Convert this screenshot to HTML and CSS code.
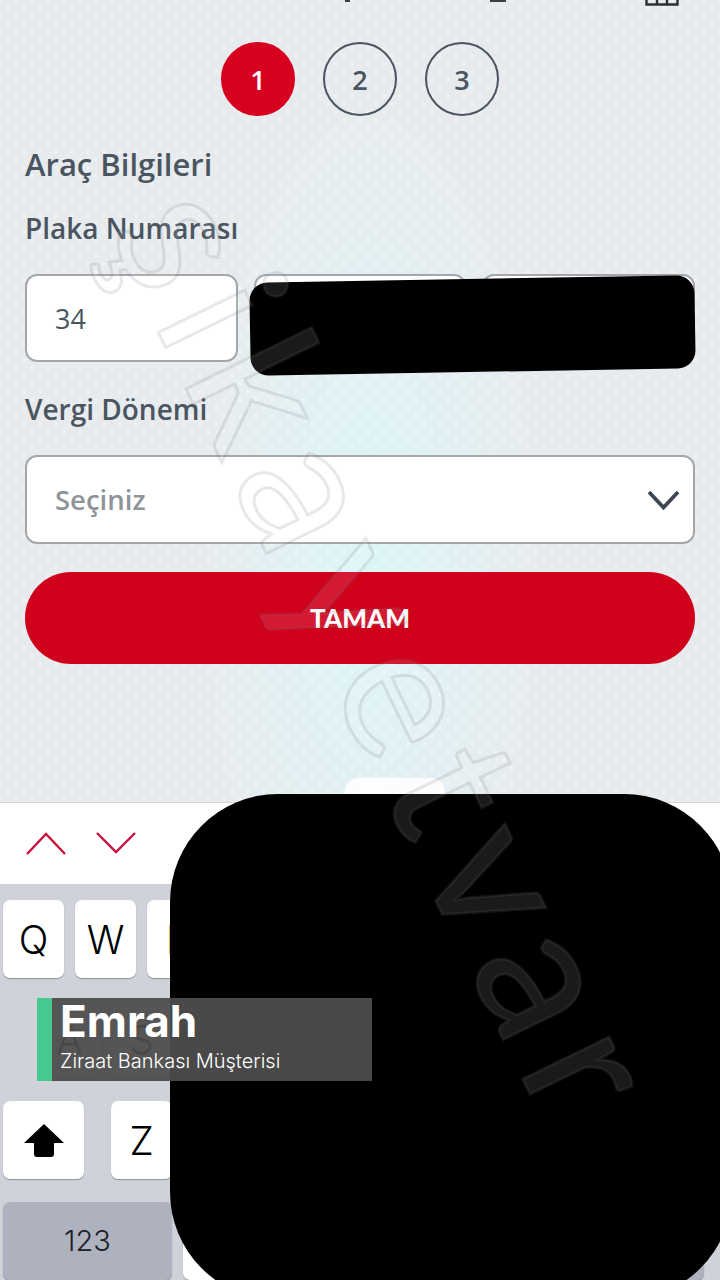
FILE: index.html
```html
<!DOCTYPE html>
<html lang="tr">
<head>
    <meta charset="utf-8">
    <title>Araç Bilgileri</title>
    <link rel="stylesheet" href="styles.css">
</head>
<body>
    <div class="screen">
        <div class="topbar">
            <span class="top-mark top-mark-a"></span>
            <span class="top-mark top-mark-b"></span>
            <svg class="top-icon" width="34" height="6" viewBox="0 0 34 6">
                <path d="M1.5 0V4.5H32.5V0M12 0V4.5M22 0V4.5" fill="none" stroke="#2b2f33" stroke-width="2.4"/>
            </svg>
        </div>

        <div class="steps">
            <div class="step step-active">1</div>
            <div class="step">2</div>
            <div class="step">3</div>
        </div>

        <div class="form">
            <h2 class="form-title">Araç Bilgileri</h2>
            <div class="form-label plate-label">Plaka Numarası</div>
            <div class="plate-row">
                <div class="field">34</div>
                <div class="field"></div>
                <div class="field"></div>
            </div>
            <div class="form-label period-label">Vergi Dönemi</div>
            <div class="field select-field">
                <span class="placeholder">Seçiniz</span>
                <svg width="33" height="20" viewBox="0 0 33 20">
                    <path d="M2 2L16.5 17.5L31 2" fill="none" stroke="#3e474f" stroke-width="3.8"/>
                </svg>
            </div>
            <button class="submit-btn" type="button">TAMAM</button>
        </div>

        <div class="keyboard-area">
            <div class="accessory-bar">
                <svg width="40" height="24" viewBox="0 0 40 24">
                    <path d="M1 23L20 3L39 23" fill="none" stroke="#c8103e" stroke-width="2.4"/>
                </svg>
                <svg width="40" height="24" viewBox="0 0 40 24">
                    <path d="M1 2L20 21L39 2" fill="none" stroke="#c8103e" stroke-width="2.4"/>
                </svg>
            </div>
            <div class="keyboard">
                <div class="key-row row-one">
                    <div class="key">Q</div>
                    <div class="key">W</div>
                    <div class="key">E</div>
                </div>
                <div class="key-row row-two">
                    <div class="key">A</div>
                    <div class="key">S</div>
                </div>
                <div class="key-row row-three">
                    <div class="key key-shift">
                        <svg width="42" height="36" viewBox="0 0 42 36">
                            <path d="M21 2L41 21H31V32Q31 35 28 35H14Q11 35 11 32V21H1Z" fill="#000"/>
                        </svg>
                    </div>
                    <div class="key">Z</div>
                </div>
                <div class="key-row row-four">
                    <div class="key key-dark key-num">123</div>
                    <div class="key key-space"></div>
                    <div class="key key-return"></div>
                </div>
            </div>
        </div>

        <div class="popup-blob"></div>
        <div class="cover cover-plate"></div>
        <div class="cover cover-keyboard"></div>
        <div class="watermark">şikayetvar</div>

        <div class="caption">
            <div class="caption-name">Emrah</div>
            <div class="caption-role">Ziraat Bankası Müşterisi</div>
        </div>
    </div>
</body>
</html>
```

FILE: styles.css
```css
body {
    margin: 0;
    font-family: "Open Sans", Lato, sans-serif;
    color: #4a5560;
}

.screen {
    position: relative;
    width: 720px;
    height: 1280px;
    overflow: hidden;
    display: flex;
    flex-direction: column;
    background-color: #e7ebee;
    background-image:
        radial-gradient(circle, rgba(255, 255, 255, 0.4) 1.3px, transparent 2.1px),
        radial-gradient(circle, rgba(255, 255, 255, 0.4) 1.3px, transparent 2.1px),
        radial-gradient(ellipse 170px 460px at 370px 560px, #dcf6f8, transparent);
    background-size: 16px 16px, 16px 16px, 100% 100%;
    background-position: 0 0, 8px 8px, 0 0;
}

.topbar {
    height: 6px;
    display: flex;
}

.top-mark {
    display: block;
    background: #3a3f44;
}

.top-mark-a {
    width: 5px;
    height: 2px;
    margin-left: 345px;
}

.top-mark-b {
    width: 16px;
    height: 2px;
    margin-left: 140px;
}

.top-icon {
    margin-left: 139px;
}

.steps {
    display: flex;
    justify-content: center;
    gap: 28px;
    margin-top: 36px;
}

.step {
    width: 74px;
    height: 74px;
    box-sizing: border-box;
    border: 2px solid #4b5560;
    border-radius: 50%;
    display: flex;
    align-items: center;
    justify-content: center;
    font-size: 27px;
    font-weight: 600;
}

.step-active {
    background: #d8001f;
    border-color: #d8001f;
    color: #fff;
}

.form {
    padding: 0 25px;
}

.form-title {
    margin: 28px 0 0;
    height: 40px;
    line-height: 40px;
    font-size: 31px;
    font-weight: 600;
}

.form-label {
    height: 40px;
    line-height: 40px;
    font-size: 28px;
    font-weight: 600;
}

.plate-label {
    margin-top: 24px;
}

.period-label {
    margin-top: 27px;
}

.plate-row {
    display: grid;
    grid-template-columns: 1fr 1fr 1fr;
    gap: 16px;
    margin-top: 26px;
}

.field {
    height: 88px;
    box-sizing: border-box;
    padding: 0 13px 0 28px;
    border: 2px solid #a3a7ab;
    border-radius: 12px;
    background: #fff;
    display: flex;
    align-items: center;
    font-size: 27px;
}

.select-field {
    height: 89px;
    margin-top: 26px;
    justify-content: space-between;
}

.placeholder {
    color: #8f9499;
    font-size: 27.5px;
    font-weight: 600;
}

.submit-btn {
    display: block;
    width: 100%;
    height: 92px;
    margin-top: 28px;
    border: none;
    border-radius: 46px;
    background: #d0011b;
    color: #fff;
    font-family: Lato, sans-serif;
    font-size: 26px;
    font-weight: 900;
}

.keyboard-area {
    position: absolute;
    left: 0;
    right: 0;
    top: 802px;
}

.accessory-bar {
    height: 82px;
    box-sizing: border-box;
    padding: 18px 0 0 26px;
    border-top: 1px solid #d3d6da;
    background: #fff;
    display: flex;
    align-items: flex-start;
    gap: 30px;
}

.accessory-bar svg {
    margin-top: 10px;
}

.keyboard {
    height: 396px;
    box-sizing: border-box;
    padding: 16px 3px 0;
    background: #cfd2d9;
    display: flex;
    flex-direction: column;
    gap: 22.6px;
}

.key-row {
    display: flex;
    gap: 11px;
    height: 78px;
    flex: none;
}

.row-two {
    padding-left: 36px;
}

.row-three {
    gap: 27px;
}

.key {
    width: 61px;
    height: 78px;
    flex: none;
    border-radius: 7px;
    background: #fff;
    box-shadow: 0 1px 1px #8d9097;
    display: flex;
    align-items: center;
    justify-content: center;
    font-family: Inter, sans-serif;
    font-size: 39px;
    font-weight: 300;
    color: #000;
}

.key-shift {
    width: 81px;
}

.key-dark {
    background: #adb2be;
    color: #1c2027;
}

.key-num {
    width: 169px;
    font-size: 29px;
}

.key-space {
    width: 340px;
}

.key-return {
    width: 170px;
    background: #adb2be;
}

.popup-blob {
    position: absolute;
    left: 345px;
    top: 778px;
    width: 100px;
    height: 30px;
    border-radius: 14px 14px 0 0;
    background: rgba(255, 255, 255, 0.85);
}

.cover {
    position: absolute;
    background: #000;
}

.cover-plate {
    left: 250px;
    top: 279px;
    width: 445px;
    height: 93px;
    border-radius: 18px;
    transform: rotate(-1deg);
}

.cover-keyboard {
    left: 170px;
    top: 794px;
    width: 562px;
    height: 506px;
    border-radius: 108px;
}

.watermark {
    position: absolute;
    left: 398px;
    top: 655px;
    transform: translate(-50%, -50%) rotate(64deg);
    font-family: Lato, sans-serif;
    font-size: 190px;
    letter-spacing: 18px;
    line-height: 1;
    white-space: nowrap;
    color: rgba(255, 255, 255, 0.1);
    -webkit-text-stroke: 3px rgba(110, 115, 120, 0.16);
}

.caption {
    position: absolute;
    left: 37px;
    top: 998px;
    width: 335px;
    height: 83px;
    box-sizing: border-box;
    padding-left: 8px;
    border-left: 15px solid #45c98f;
    background: rgba(76, 76, 76, 0.95);
    color: #fff;
    font-family: Inter, sans-serif;
}

.caption-name {
    font-size: 44px;
    font-weight: 700;
    line-height: 46px;
}

.caption-role {
    margin-top: 4px;
    font-size: 20px;
    font-weight: 300;
    line-height: 26px;
}
```
